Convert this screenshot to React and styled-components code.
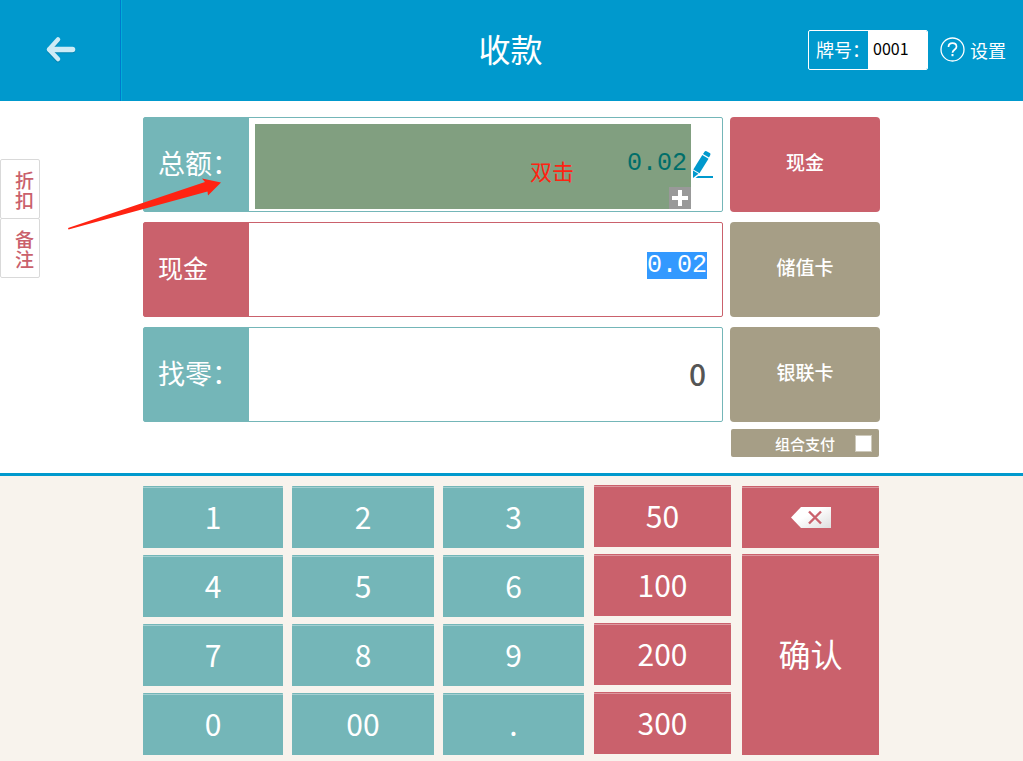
import { useEffect, useRef, useState } from 'react';
import styled, { createGlobalStyle } from 'styled-components';

const TEAL = '#74b6b8';
const PINK = '#ca616c';
const KHAKI = '#a69e86';
const BLUE = '#0099cd';

const DIGITS = ['1', '2', '3', '4', '5', '6', '7', '8', '9', '0', '00', '.'];

const AMOUNTS = ['50', '100', '200', '300'];

const METHODS = ['现金', '储值卡', '银联卡'];

const GlobalStyle = createGlobalStyle`
  * {
    box-sizing: border-box;
  }

  body {
    margin: 0;
    background: #fff;
    font-family: 'Noto Sans CJK SC', sans-serif;
  }

  button,
  input,
  textarea {
    margin: 0;
    padding: 0;
    border: 0;
    border-radius: 0;
    font-family: inherit;
  }

  button {
    cursor: pointer;
  }
`;

const Page = styled.div`
  display: flex;
  flex-direction: column;
  min-height: 100vh;
`;

const Header = styled.header`
  display: grid;
  grid-template-columns: 1fr auto 1fr;
  align-items: center;
  height: 101px;
  background: ${BLUE};
  color: #fff;
`;

const BackButton = styled.button`
  display: flex;
  align-items: center;
  justify-content: center;
  width: 122px;
  height: 101px;
  padding-bottom: 2px;
  background: ${BLUE};
  border-right: 1px solid #00aed8;
  box-shadow: inset -1px 0 0 #0079cc;
`;

const Title = styled.h1`
  margin: 0;
  padding: 0 2px 6px 0;
  font-size: 32px;
  font-weight: 400;
  line-height: 40px;
`;

const HeaderTools = styled.div`
  display: flex;
  align-items: center;
  justify-content: flex-end;
  gap: 12px;
  padding: 0 17px 2px 0;
`;

const PlateBox = styled.div`
  display: flex;
  width: 120px;
  height: 40px;
  border: 1px solid #fff;
  border-radius: 2px;
  overflow: hidden;
`;

const PlateLabel = styled.label`
  width: 59px;
  padding-left: 7px;
  font-size: 18px;
  line-height: 36px;
  white-space: nowrap;
`;

const PlateInput = styled.input`
  flex: 1;
  min-width: 0;
  padding: 0 0 4px 5px;
  background: #fff;
  color: #000;
  font-size: 16px;
`;

const SettingsLink = styled.a`
  display: flex;
  align-items: center;
  gap: 5px;
  color: #fff;
  font-size: 18px;
  line-height: 24px;
  text-decoration: none;
`;

const Main = styled.main`
  display: grid;
  grid-template-columns: 1fr minmax(0, 737px) 1fr;
  padding: 16px 0;
`;

const SideTabs = styled.nav`
  width: 40px;
  padding-top: 42px;
`;

const SideTab = styled.button`
  display: block;
  width: 40px;
  height: 60px;
  padding: 2px 6px 0 14px;
  background: #fff;
  border: 1px solid #d9d9d9;
  border-radius: 2px;
  color: ${PINK};
  font-size: 19px;
  font-weight: 500;
  line-height: 20px;

  & + & {
    margin-top: -1px;
  }
`;

const Board = styled.div`
  position: relative;
  display: grid;
  grid-template-columns: minmax(0, 1fr) 150px;
  align-items: start;
  gap: 7px;
`;

const Stack = styled.div`
  display: grid;
  gap: 10px;
`;

const Row = styled.div`
  display: flex;
  height: 95px;
  border: 1px solid ${({ $color }) => $color};
  border-radius: 2px;
  background: #fff;
`;

const RowLabel = styled.label`
  width: 105px;
  padding-left: 14px;
  background: ${({ $color }) => $color};
  color: #fff;
  font-size: ${({ $size }) => $size || '27px'};
  line-height: 89px;
  white-space: nowrap;
`;

const TotalArea = styled.div`
  position: relative;
  flex: 1;
  margin: 6px 0 2px 6px;
`;

const TotalInput = styled.textarea`
  display: block;
  width: 100%;
  height: 85px;
  padding: 26px 4px 0 0;
  background: #819f80;
  color: #006e6a;
  font-family: 'Liberation Mono', monospace;
  font-size: 25px;
  line-height: 27px;
  text-align: right;
  resize: none;
  overflow: hidden;
`;

const Hint = styled.span`
  position: absolute;
  right: 117px;
  top: 31px;
  color: #ff2312;
  font-size: 22px;
  line-height: 30px;
`;

const AddButton = styled.button`
  position: absolute;
  right: 0;
  bottom: 0;
  display: flex;
  width: 22px;
  height: 22px;
  background: #999;
`;

const EditButton = styled.button`
  display: flex;
  align-items: center;
  justify-content: center;
  width: 31px;
  padding-right: 7px;
  background: none;
`;

const CashInput = styled.input`
  flex: 1;
  min-width: 0;
  height: 27px;
  margin: 29px 15px 0;
  background: none;
  outline: none;
  color: #333;
  font-family: 'Liberation Mono', monospace;
  font-size: 25px;
  line-height: 27px;
  text-align: right;

  &::selection {
    background: #3399ff;
    color: #fff;
  }
`;

const ChangeOutput = styled.output`
  flex: 1;
  padding-right: 16px;
  color: #555;
  font-size: 30px;
  font-weight: 500;
  line-height: 91px;
  text-align: right;
`;

const MethodButton = styled.button`
  height: 95px;
  padding-bottom: 6px;
  background: ${({ $active }) => ($active ? PINK : KHAKI)};
  border-radius: 4px;
  color: #fff;
  font-size: 19px;
  font-weight: 500;
`;

const Combined = styled.label`
  display: flex;
  align-items: center;
  justify-content: flex-end;
  gap: 20px;
  height: 28px;
  margin: -3px 1px 0;
  padding-right: 7px;
  background: ${KHAKI};
  border-radius: 2px;
  color: #fff;
  font-size: 15px;
  font-weight: 500;
`;

const Checkbox = styled.input`
  appearance: none;
  width: 17px;
  height: 17px;
  background: #fff;
  border: 1px solid #cdc9bb;

  &:checked {
    background: ${PINK};
  }
`;

const Arrow = styled.svg`
  position: absolute;
  left: -76px;
  top: 61px;
  pointer-events: none;
`;

const Keypad = styled.section`
  flex: 1;
  padding: 9px 0 6px;
  background: #f8f3ed;
  border-top: 3px solid ${BLUE};
`;

const KeypadInner = styled.div`
  display: grid;
  grid-template-columns: minmax(0, 441fr) minmax(0, 137fr) minmax(0, 138fr);
  column-gap: 10px;
  max-width: 737px;
  padding-right: 1px;
  margin: 0 auto;
`;

const DigitKeys = styled.div`
  display: grid;
  grid-template-columns: 140fr 142fr 141fr;
  grid-auto-rows: 62px;
  gap: 7px 9px;
  padding-top: 1px;
`;

const AmountKeys = styled.div`
  display: grid;
  grid-auto-rows: 62px;
  gap: 7px;
`;

const ActionKeys = styled.div`
  display: grid;
  grid-template-rows: 62px 201px;
  gap: 6px;
  padding: 1px 0 0 1px;
`;

const Key = styled.button`
  display: flex;
  align-items: center;
  justify-content: center;
  padding-bottom: ${({ $icon }) => ($icon ? '0' : '4px')};
  background: ${({ $color }) => $color};
  border-top: 1px solid ${({ $color }) => $color};
  border-radius: 1px 1px 0 0;
  box-shadow: inset 0 1px 0 rgba(255, 255, 255, 0.35);
  color: #fff;
  font-size: ${({ $size }) => $size || '30px'};
`;

const BackIcon = () => (
  <svg width="32" height="28" viewBox="0 0 32 28" fill="none" strokeLinecap="round">
    <g stroke="#0083b0" transform="translate(0 1)">
      <path d="M13 4 4 14l9 9.500" strokeWidth="4" strokeLinejoin="round" />
      <path d="M5 13.500h22.500" strokeWidth="5.500" />
    </g>
    <g stroke="#cdebf6">
      <path d="M13 3.500 4 13.500l9 9.500" strokeWidth="4.500" strokeLinejoin="round" />
      <path d="M5 13.500h22.500" strokeWidth="5.500" />
    </g>
  </svg>
);

const HelpIcon = () => (
  <svg width="25" height="25" viewBox="0 0 25 25" fill="none" stroke="#fff">
    <circle cx="12.500" cy="12.500" r="11.500" strokeWidth="1.300" />
    <path d="M8.500 10c0-2.500 1.600-3.800 4-3.800s4 1.300 4 3.500c0 3-4 3-4 6" strokeWidth="1.700" />
    <path d="M12.500 17v2.200" strokeWidth="2" />
  </svg>
);

const PencilIcon = () => (
  <svg width="22" height="30" viewBox="0 0 22 30" fill={BLUE}>
    <path d="M12.500 1.800Q13.300.500 14.500 1.200L17.800 3q1.100.700.500 1.900L17 7.500 11 4z" />
    <path d="M10.300 5 16.500 8.700 7.500 23.200 1.300 19.500z" />
    <path d="M1 20.500 6.500 23.800 1 28z" />
    <path d="M6 26h15v2H3.500z" />
  </svg>
);

const PlusIcon = () => (
  <svg width="22" height="22" viewBox="0 0 22 22">
    <path d="M9 3h4v6h6v4h-6v6H9v-6H3V9h6z" fill="#fff" />
  </svg>
);

const EraseIcon = () => (
  <svg width="40" height="21" viewBox="0 0 40 21">
    <defs>
      <linearGradient id="erase" x1="0" y1="0" x2="1" y2="1">
        <stop offset="0.400" stopColor="#fff" />
        <stop offset="1" stopColor="#dedede" />
      </linearGradient>
    </defs>
    <path d="M0 10.500 10 0h30v21H10z" fill="url(#erase)" />
    <path d="M18 4.500l12 12M30 4.500l-12 12" stroke={PINK} strokeWidth="2.400" />
  </svg>
);

const App = () => {
  const [total, setTotal] = useState('0.02');
  const [cash, setCash] = useState('0.02');
  const [plate, setPlate] = useState('0001');
  const [method, setMethod] = useState('现金');
  const cashRef = useRef(null);

  useEffect(() => {
    cashRef.current.focus();
    cashRef.current.select();
  }, []);

  const change = Math.max(0, Number(cash) - Number(total)) || 0;

  return (
    <Page>
      <GlobalStyle />
      <Header>
        <BackButton type="button" aria-label="返回">
          <BackIcon />
        </BackButton>
        <Title>收款</Title>
        <HeaderTools>
          <PlateBox>
            <PlateLabel htmlFor="plate">牌号：</PlateLabel>
            <PlateInput id="plate" value={plate} onChange={(e) => setPlate(e.target.value)} />
          </PlateBox>
          <SettingsLink href="#settings">
            <HelpIcon />
            设置
          </SettingsLink>
        </HeaderTools>
      </Header>
      <Main>
        <SideTabs>
          <SideTab type="button">折扣</SideTab>
          <SideTab type="button">备注</SideTab>
        </SideTabs>
        <Board>
          <Stack>
            <Row $color={TEAL}>
              <RowLabel htmlFor="total" $color={TEAL}>
                总额：
              </RowLabel>
              <TotalArea>
                <TotalInput id="total" value={total} onChange={(e) => setTotal(e.target.value)} />
                <Hint>双击</Hint>
                <AddButton type="button" aria-label="添加">
                  <PlusIcon />
                </AddButton>
              </TotalArea>
              <EditButton type="button" aria-label="编辑">
                <PencilIcon />
              </EditButton>
            </Row>
            <Row $color={PINK}>
              <RowLabel htmlFor="cash" $color={PINK} $size="25px">
                现金
              </RowLabel>
              <CashInput
                id="cash"
                ref={cashRef}
                value={cash}
                onChange={(e) => setCash(e.target.value)}
              />
            </Row>
            <Row $color={TEAL}>
              <RowLabel htmlFor="change" $color={TEAL}>
                找零：
              </RowLabel>
              <ChangeOutput id="change">{change}</ChangeOutput>
            </Row>
          </Stack>
          <Stack>
            {METHODS.map((name) => (
              <MethodButton
                key={name}
                type="button"
                $active={name === method}
                onClick={() => setMethod(name)}
              >
                {name}
              </MethodButton>
            ))}
            <Combined>
              组合支付
              <Checkbox type="checkbox" />
            </Combined>
          </Stack>
          <Arrow width="156" height="54" viewBox="0 0 156 54">
            <path d="M1 50 138 4 135 .500 154 4.500 141 17.500 140.500 13.500 1.500 51.500z" fill="#ff2312" />
          </Arrow>
        </Board>
      </Main>
      <Keypad>
        <KeypadInner>
          <DigitKeys>
            {DIGITS.map((digit) => (
              <Key
                key={digit}
                type="button"
                $color={TEAL}
                onClick={() => setCash(`${cash}${digit}`)}
              >
                {digit}
              </Key>
            ))}
          </DigitKeys>
          <AmountKeys>
            {AMOUNTS.map((amount) => (
              <Key key={amount} type="button" $color={PINK} onClick={() => setCash(amount)}>
                {amount}
              </Key>
            ))}
          </AmountKeys>
          <ActionKeys>
            <Key
              type="button"
              aria-label="删除"
              $color={PINK}
              $icon
              onClick={() => setCash(cash.slice(0, -1))}
            >
              <EraseIcon />
            </Key>
            <Key type="button" $color={PINK} $size="32px">
              确认
            </Key>
          </ActionKeys>
        </KeypadInner>
      </Keypad>
    </Page>
  );
};

export default App;
